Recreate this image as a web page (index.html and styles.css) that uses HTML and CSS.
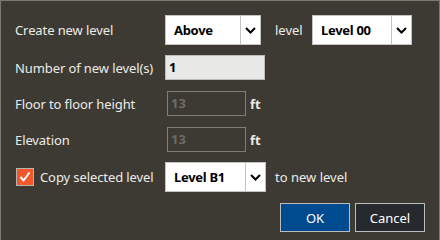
FILE: index.html
```html
<!DOCTYPE html>
<html lang="en">
<head>
    <meta charset="UTF-8">
    <meta name="viewport" content="width=device-width, initial-scale=1.0">
    <title>Create Levels</title>
    <link rel="stylesheet" href="styles.css">
</head>
<body>
    <div class="dialog">
        <div class="row row-combo">
            <span class="label">Create new level</span>
            <div class="combo combo-above">
                <span class="value">Above</span>
                <span class="arrow"><svg width="11" height="7" viewBox="0 0 11 7"><path d="M1 1 L5.5 5.5 L10 1" fill="none" stroke="#000" stroke-width="2"/></svg></span>
            </div>
            <span class="text-after text-level">level</span>
            <div class="combo combo-level">
                <span class="value">Level 00</span>
                <span class="arrow"><svg width="11" height="7" viewBox="0 0 11 7"><path d="M1 1 L5.5 5.5 L10 1" fill="none" stroke="#000" stroke-width="2"/></svg></span>
            </div>
        </div>

        <div class="row row-input">
            <span class="label">Number of new level(s)</span>
            <div class="input input-count">1</div>
        </div>

        <div class="row row-input">
            <span class="label">Floor to floor height</span>
            <div class="input input-disabled">13</div>
            <span class="unit">ft</span>
        </div>

        <div class="row row-input">
            <span class="label">Elevation</span>
            <div class="input input-disabled">13</div>
            <span class="unit">ft</span>
        </div>

        <div class="row row-combo">
            <label class="label check-label">
                <span class="checkbox"><svg width="14" height="14" viewBox="0 0 14 14"><path d="M2.5 7 L5.5 10.5 L11.5 2.5" fill="none" stroke="#fff" stroke-width="2"/></svg></span>
                Copy selected level
            </label>
            <div class="combo combo-copy">
                <span class="value">Level B1</span>
                <span class="arrow"><svg width="11" height="7" viewBox="0 0 11 7"><path d="M1 1 L5.5 5.5 L10 1" fill="none" stroke="#000" stroke-width="2"/></svg></span>
            </div>
            <span class="text-after text-copy">to new level</span>
        </div>

        <div class="buttons">
            <button class="btn btn-ok">OK</button>
            <button class="btn btn-cancel">Cancel</button>
        </div>
    </div>
</body>
</html>
```

FILE: styles.css
```css
body {
    margin: 0;
    font-family: 'Noto Sans', sans-serif;
    font-size: 13px;
    background-color: #3d3a33;
}

.dialog {
    width: 440px;
    height: 240px;
    box-sizing: border-box;
    border: 1px solid #7c7975;
    border-bottom: none;
    padding: 14px 14px 0 14px;
    color: #ecebe9;
}

.row {
    display: flex;
    align-items: center;
}

.row-combo {
    height: 30px;
}

.row-input {
    height: 25px;
    margin-top: 10px;
}

.row-combo + .row-input {
    margin-top: 10px;
}

.row-input + .row-input {
    margin-top: 11px;
}

.row-input + .row-combo {
    margin-top: 10px;
}

.label {
    width: 150px;
    flex-shrink: 0;
    letter-spacing: -0.1px;
}

.combo {
    display: flex;
    height: 30px;
    box-sizing: border-box;
    background-color: #fff;
    border: 1px solid #c3c3c3;
    color: #000;
    font-weight: bold;
    letter-spacing: -0.3px;
}

.combo .value {
    flex: 1;
    padding-left: 8px;
    line-height: 28px;
}

.combo .arrow {
    width: 19px;
    border-left: 1px solid #c3c3c3;
    display: flex;
    align-items: center;
    justify-content: center;
}

.combo-above {
    width: 96px;
}

.combo-level {
    width: 100px;
}

.combo-copy {
    width: 101px;
}

.text-level {
    width: 37px;
    margin-left: 14px;
}

.text-copy {
    margin-left: 9px;
}

.input {
    height: 25px;
    box-sizing: border-box;
    line-height: 23px;
    padding-left: 3px;
    font-weight: bold;
}

.input-count {
    width: 100px;
    background-color: #e8e8e6;
    border: 1px solid #bdbdbd;
    color: #000;
}

.input-disabled {
    width: 79px;
    margin-left: 2px;
    border: 1px solid #7f7d79;
    color: #6c6a66;
}

.unit {
    margin-left: 4px;
    font-weight: bold;
}

.check-label {
    display: flex;
    align-items: center;
    gap: 6px;
}

.checkbox {
    width: 18px;
    height: 18px;
    margin-left: 1px;
    box-sizing: border-box;
    background-color: #f2572b;
    border: 1px solid #b9b3ad;
    display: flex;
    align-items: center;
    justify-content: center;
}

.buttons {
    display: flex;
    justify-content: flex-end;
    gap: 5px;
    margin-top: 11px;
}

.btn {
    width: 70px;
    height: 29px;
    font-family: 'Noto Sans', sans-serif;
    font-size: 13px;
    color: #fff;
    border: 1px solid #bcbcbc;
    cursor: pointer;
}

.btn-ok {
    background-color: #004b8f;
}

.btn-cancel {
    background-color: #262a2f;
}
```
